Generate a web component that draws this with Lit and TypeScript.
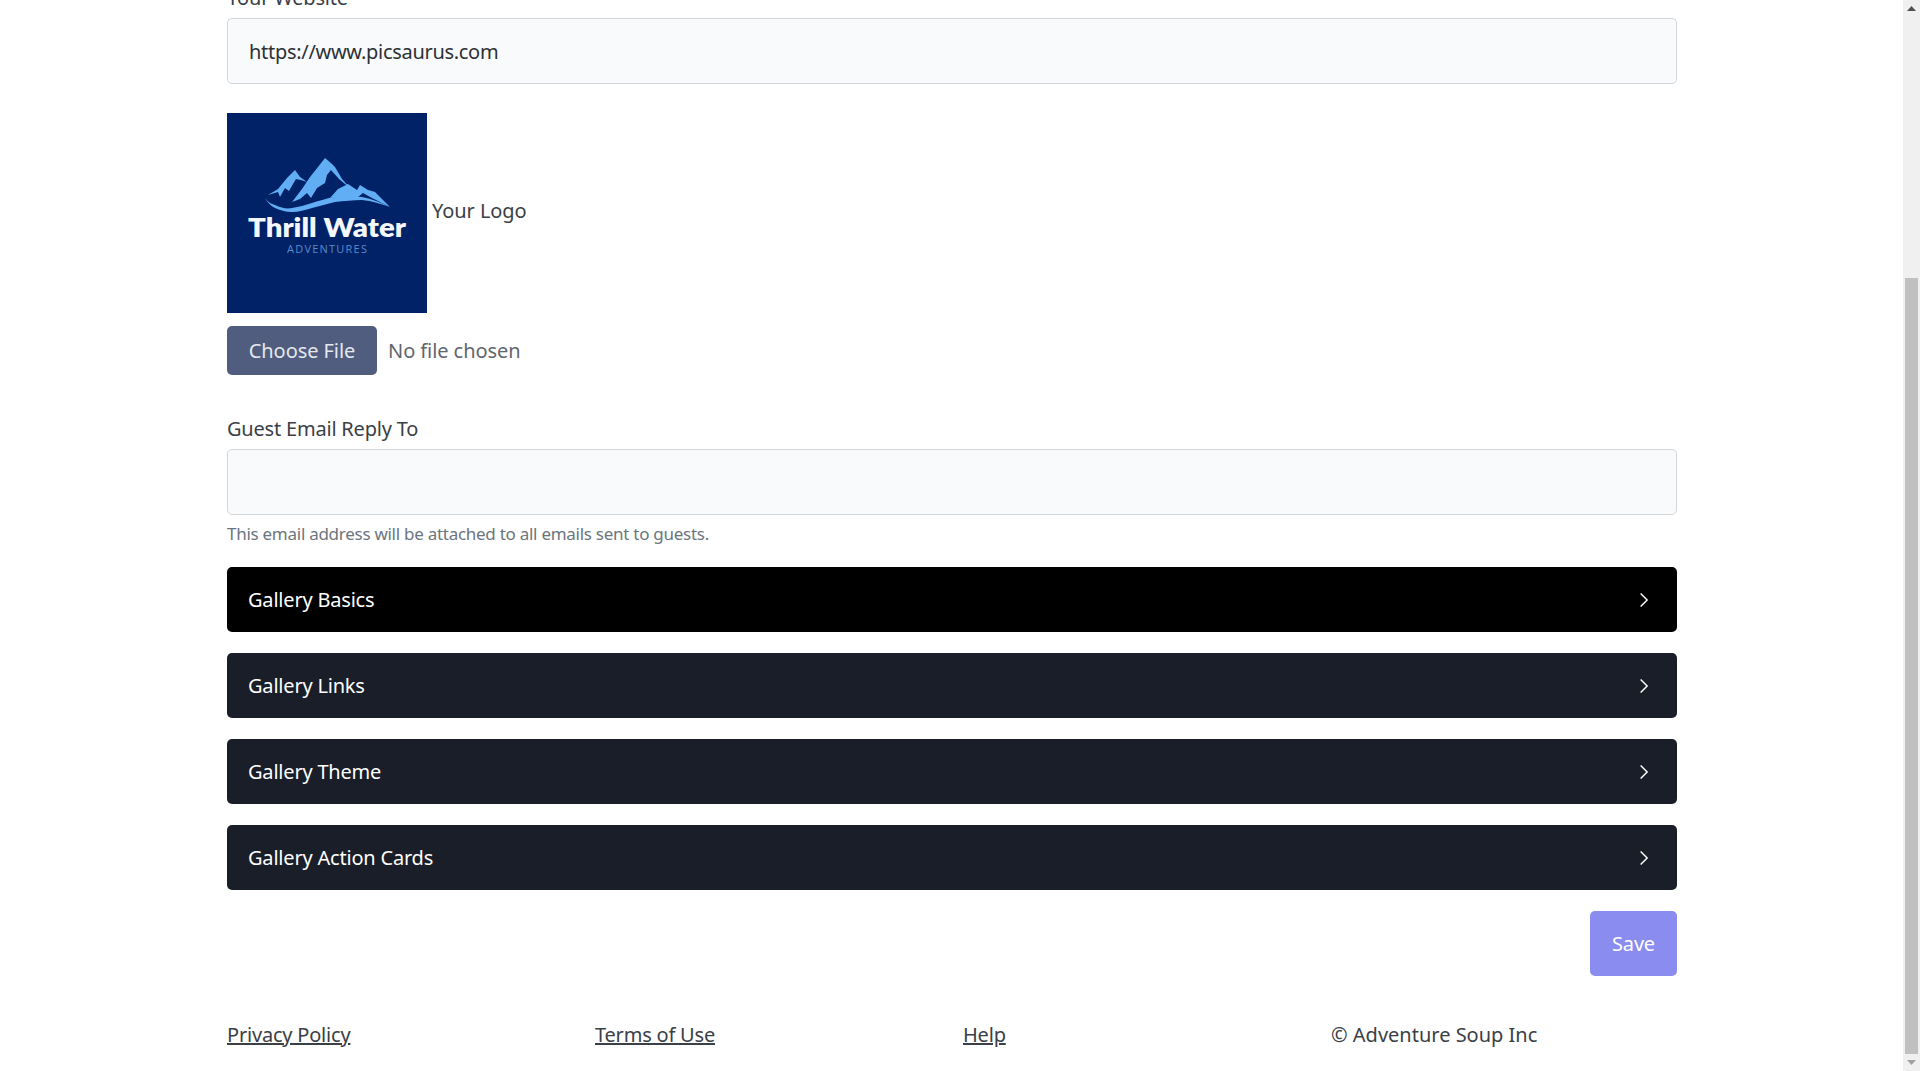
import { LitElement, html, css, svg } from "lit";
import { customElement } from "lit/decorators.js";

const logo = svg`
<svg class="logo" viewBox="0 0 200 200" width="200" height="200" role="img" aria-label="Thrill Water Adventures">
  <rect width="200" height="200" fill="#012266"/>
  <path fill="#62aef5" d="M41 82 L51 76 L60 65 L68 57 L73 64 L80 69 L74 67 L69 66 L66 71 L62 78 L58 75 L53 84 L51 79 Z"/>
  <path fill="#62aef5" d="M65 89 L75 76 L83 64 L91 54 L98 45 L105 51 L108 54 L115 66 L124 76 L112 66 L104 57 L100 62 L98 70 L90 75 L84 85 L80 80 L73 86 Z"/>
  <path fill="#62aef5" d="M103 85 L111 76 L121 71 L130 77 L133 72 L141 77 L148 79 L163 94 L145 85 L136 80 L131 84 L115 84 Z"/>
  <path fill="#62aef5" d="M38 85 C41 89 44 91 48 92 C54 95 60 96 65 95 C72 94 78 92 85 90 C92 88 100 85 108 84 C118 83 127 83 135 84 C145 86 155 90 163 94 C154 91 145 88 135 87 C126 87 117 88 108 89 C100 91 93 93 85 95 C78 97 72 99 65 99 C58 99 53 97 48 95 C44 93 40 89 38 85 Z"/>
  <text x="100" y="123.5" text-anchor="middle" class="brand" textLength="158" lengthAdjust="spacingAndGlyphs">Thrill Water</text>
  <text x="100" y="140" text-anchor="middle" class="sub" textLength="80" lengthAdjust="spacing">ADVENTURES</text>
</svg>`;

const chevron = html`<svg class="chev" viewBox="0 0 16 16" width="18" height="18" fill="none" stroke="#fff" stroke-width="1.3"><path d="M5 2.2 10.8 8 5 13.8"/></svg>`;

@customElement("app-root")
export class AppRoot extends LitElement {
  static styles = css`
    :host {
      display: flex;
      height: 1071px;
      width: 1920px;
      overflow: hidden;
      background: #fff;
      color: #3a4046;
      font-family: "Noto Sans", "Open Sans", "Liberation Sans", sans-serif;
      font-size: 20px;
      line-height: 30px;
      letter-spacing: -0.2px;
    }
    .main { flex: 1; overflow: hidden; padding: 0 226px 0 227px; min-width: 0; }
    .content { margin-top: -18px; display: flex; flex-direction: column; }
    .label { display: block; margin-bottom: 6px; height: 30px; line-height: 32px; }
    .input {
      height: 66px; box-sizing: border-box; border: 1px solid #d3d7da; border-radius: 5px;
      background: #f9fafb; padding: 2px 21px 0; display: flex; align-items: center; color: #2c3136;
      letter-spacing: -0.3px;
    }
    .logo-row { display: flex; align-items: center; margin-top: 29px; gap: 5px; }
    .logo { display: block; flex: none; }
    .brand { font: 800 27px Lato, sans-serif; fill: #f4f7fb; letter-spacing: 0; }
    .sub { font: 400 11px "Open Sans", sans-serif; fill: #5a8ac8; letter-spacing: 0; }
    .logo-label { position: relative; top: -2px; letter-spacing: -0.07px; }
    .file-row { display: flex; align-items: center; margin-top: 13px; line-height: 32px; letter-spacing: -0.07px; }
    .file-btn {
      width: 150px; height: 49px; border-radius: 5px; background: #505d7e; color: #e4e8ef;
      display: flex; align-items: center; justify-content: center;
    }
    .file-name { margin-left: 11px; color: #5f666d; }
    .guest { margin-top: 38px; }
    .help { font-size: 17px; line-height: 25px; color: #6c757d; margin-top: 6px; letter-spacing: -0.27px; }
    .panels { display: flex; flex-direction: column; gap: 21px; margin-top: 21px; }
    .panel {
      height: 65px; border-radius: 5px; background: #191e29; color: #fff; display: flex;
      align-items: center; justify-content: space-between; padding: 0 24px 0 21px;
    }
    .panel.active { background: #000; }
    .chev { display: block; }
    .save-row { display: flex; justify-content: flex-end; margin-top: 21px; }
    .save {
      width: 87px; height: 65px; border-radius: 5px; background: #8a8cf0; color: #fff;
      display: flex; align-items: center; justify-content: center;
    }
    .footer { display: grid; grid-template-columns: repeat(4, 368px); margin-top: 44px; }
    .footer a { color: #3a4046; text-decoration: underline; }
    .footer span { letter-spacing: 0; }
    .scrollbar {
      flex: none; width: 17px; background: #f0f0f0; display: flex; flex-direction: column; align-items: center;
      height: 1071px;
    }
    .arrow { flex: none; height: 17px; display: flex; align-items: center; justify-content: center; }
    .track { flex: 1; width: 100%; padding-top: 261px; box-sizing: border-box; display: flex; flex-direction: column; align-items: center; }
    .thumb { flex: 1; width: 13px; background: #c0c0c0; }
  `;

  render() {
    return html`
      <div class="main">
        <div class="content">
          <label class="label">Your Website</label>
          <div class="input">https://www.picsaurus.com</div>
          <div class="logo-row">${logo}<span class="logo-label">Your Logo</span></div>
          <div class="file-row"><div class="file-btn">Choose File</div><span class="file-name">No file chosen</span></div>
          <label class="label guest">Guest Email Reply To</label>
          <div class="input"></div>
          <div class="help">This email address will be attached to all emails sent to guests.</div>
          <div class="panels">
            <div class="panel active"><span>Gallery Basics</span>${chevron}</div>
            <div class="panel"><span>Gallery Links</span>${chevron}</div>
            <div class="panel"><span>Gallery Theme</span>${chevron}</div>
            <div class="panel"><span>Gallery Action Cards</span>${chevron}</div>
          </div>
          <div class="save-row"><div class="save">Save</div></div>
          <div class="footer">
            <div><a href="#">Privacy Policy</a></div>
            <div><a href="#">Terms of Use</a></div>
            <div><a href="#">Help</a></div>
            <div><span>© Adventure Soup Inc</span></div>
          </div>
        </div>
      </div>
      <div class="scrollbar">
        <div class="arrow"><svg width="9" height="5" viewBox="0 0 9 5"><path d="M4.5 0 9 5H0z" fill="#505050"/></svg></div>
        <div class="track"><div class="thumb"></div></div>
        <div class="arrow"><svg width="9" height="5" viewBox="0 0 9 5"><path d="M0 0h9L4.5 5z" fill="#a3a3a3"/></svg></div>
      </div>
    `;
  }
}
